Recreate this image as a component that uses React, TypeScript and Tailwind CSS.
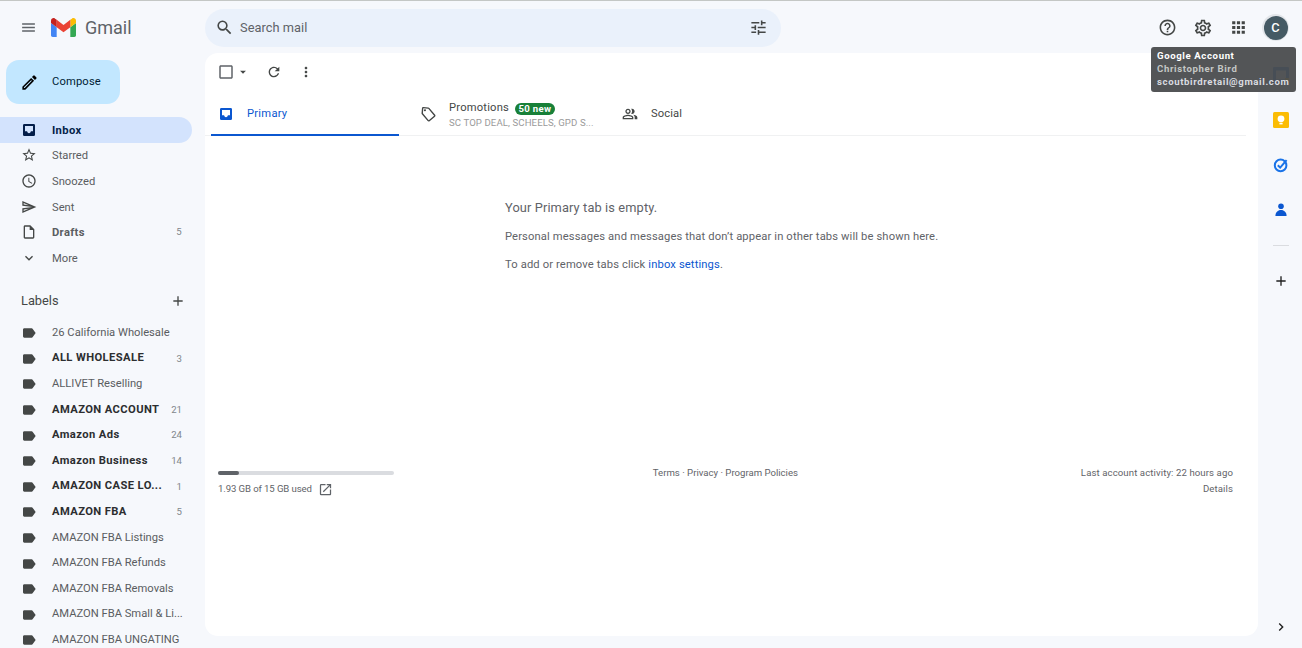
import {
  MdMenu, MdSearch, MdOutlineTune, MdHelpOutline, MdOutlineSettings, MdApps, MdStarBorder,
  MdOutlineWatchLater, MdOutlineSend, MdOutlineInsertDriveFile, MdExpandMore, MdAdd, MdLabel, MdRefresh,
  MdMoreVert, MdArrowDropDown, MdCheckBoxOutlineBlank, MdOutlineLocalOffer, MdOutlinePeopleAlt, MdOpenInNew,
  MdChevronRight, MdOutlineEdit,
} from "react-icons/md"

// filled tray, the react-icons one has a thinner frame than the picture
const InboxIcon = ({ className }: { className?: string }) => (
  <svg viewBox="0 0 24 24" className={className} fill="currentColor">
    <path fillRule="evenodd" d="M5 3h14a2 2 0 0 1 2 2v14a2 2 0 0 1-2 2H5a2 2 0 0 1-2-2V5a2 2 0 0 1 2-2zm1 3v8h3.200c0 1.500 1.300 2.800 2.800 2.800s2.800-1.300 2.800-2.800H18V6z" />
  </svg>
)

const navItems = [
  { icon: InboxIcon, name: "Inbox", active: true },
  { icon: MdStarBorder, name: "Starred" },
  { icon: MdOutlineWatchLater, name: "Snoozed" },
  { icon: MdOutlineSend, name: "Sent" },
  { icon: MdOutlineInsertDriveFile, name: "Drafts", count: "5", bold: true },
  { icon: MdExpandMore, name: "More" },
]

const labels = [
  { name: "26 California Wholesale" },
  { name: "ALL WHOLESALE", count: "3" },
  { name: "ALLIVET Reselling" },
  { name: "AMAZON ACCOUNT", count: "21" },
  { name: "Amazon Ads", count: "24" },
  { name: "Amazon Business", count: "14" },
  { name: "AMAZON CASE LO...", count: "1" },
  { name: "AMAZON FBA", count: "5" },
  { name: "AMAZON FBA Listings" },
  { name: "AMAZON FBA Refunds" },
  { name: "AMAZON FBA Removals" },
  { name: "AMAZON FBA Small & Li..." },
  { name: "AMAZON FBA UNGATING" },
]

const GmailLogo = () => (
  <svg viewBox="52 42 88 66" className="w-[25px] h-[19px]">
    <path fill="#4285f4" d="M58 108h14V74L52 59v43c0 3.32 2.69 6 6 6" />
    <path fill="#34a853" d="M120 108h14c3.32 0 6-2.69 6-6V59l-20 15" />
    <path fill="#fbbc04" d="M120 48v26l20-15v-8c0-7.42-8.47-11.65-14.4-7.2" />
    <path fill="#ea4335" d="M72 74V48l24 18 24-18v26L96 92" />
    <path fill="#c5221f" d="M52 51v8l20 15V48l-5.6-4.2c-5.94-4.45-14.4-.22-14.4 7.2" />
  </svg>
)

const Header = () => (
  <header className="h-[52px] pt-[1px] shrink-0 flex items-center">
    <div className="w-[205px] flex items-center shrink-0 pl-[20px]">
      <MdMenu className="w-[17px] h-[17px] text-[#5f6368]" />
      <div className="ml-[14px] flex"><GmailLogo /></div>
      <span className="ml-[9px] text-[18px] leading-none text-[#5f6368]">Gmail</span>
    </div>
    <div className="w-[576px] h-[38px] rounded-full bg-[#eaf1fb] flex items-center pl-[10px] pr-[13px]">
      <MdSearch className="w-[19px] h-[19px] text-[#444746]" />
      <span className="ml-[6px] text-[12.8px] tracking-[0.05px] text-[#5f6368]">Search mail</span>
      <MdOutlineTune className="ml-auto w-[19px] h-[19px] text-[#444746]" />
    </div>
    <div className="ml-auto flex items-center pr-[13px]">
      <MdHelpOutline className="w-[19px] h-[19px] text-[#444746]" />
      <MdOutlineSettings className="ml-[16px] w-[20px] h-[20px] text-[#444746]" />
      <MdApps className="ml-[16px] w-[19px] h-[19px] text-[#444746]" />
      <div className="ml-[14px] w-[27px] h-[27px] rounded-full bg-[#e3e6ea] flex items-center justify-center">
        <div className="w-[24px] h-[24px] rounded-full bg-[#455a64] text-white text-[12.8px] font-medium flex items-center justify-center">C</div>
      </div>
    </div>
  </header>
)

const Sidebar = () => (
  <aside className="w-[205px] shrink-0 overflow-hidden">
    <div className="ml-[6px] mt-[7px] w-[114px] h-[44px] rounded-[13px] bg-[#c2e7ff] flex items-center pl-[14px] text-[#001d35]">
      <MdOutlineEdit className="w-[19px] h-[19px] text-black" />
      <span className="ml-[13px] text-[11.2px] tracking-[0.15px]">Compose</span>
    </div>
    <nav className="mt-[13px] w-[192px]">
      {navItems.map(({ icon: Icon, name, active, count, bold }) => (
        <div key={name} className={`h-[25.6px] flex items-center pl-[21px] pr-[10px] rounded-r-full text-[11.2px] ${active ? "bg-[#d3e3fd] text-[#041e49] font-bold tracking-[0.35px]" : "text-[#5a5d61]"} ${bold ? "font-bold tracking-[0.35px] text-[#2c2e30]" : ""}`}>
          <Icon className={`w-[16px] h-[16px] shrink-0 ${active ? "text-[#041e49]" : "text-[#444746]"}`} />
          <span className="ml-[15px] relative top-[1.5px]">{name}</span>
          {count && <span className="ml-auto text-[9.6px] font-normal text-[#80868b]">{count}</span>}
        </div>
      ))}
    </nav>
    <div className="mt-[14px] w-[192px] h-[32px] flex items-center pl-[21px] pr-[6px] text-[12.8px] text-[#444746]">
      <span>Labels</span>
      <MdAdd className="ml-auto w-[16px] h-[16px]" />
    </div>
    <div className="mt-[3.4px] w-[192px]">
      {labels.map(({ name, count }) => (
        <div key={name} className={`h-[25.6px] pt-[1px] flex items-center pl-[21px] pr-[10px] text-[11.2px] ${count ? "font-bold tracking-[0.4px] text-[#2c2e30]" : "text-[#5a5d61]"}`}>
          <MdLabel className="w-[16px] h-[16px] shrink-0 text-[#444746]" />
          <span className="ml-[15px] whitespace-nowrap">{name}</span>
          {count && <span className="ml-auto pl-[8px] text-[9.6px] tracking-normal font-normal text-[#80868b]">{count}</span>}
        </div>
      ))}
    </div>
  </aside>
)

const Tabs = () => (
  <div className="mr-[12px] h-[43px] flex border-b border-[#f0f1f2]">
    <div className="ml-[6px] w-[188px] h-[43px] pl-[7px] pt-[1px] flex items-center border-b-[2px] border-[#0b57d0] text-[#0b57d0]">
      <InboxIcon className="w-[16px] h-[16px]" />
      <span className="ml-[13px] text-[11.2px] tracking-[0.25px]">Primary</span>
    </div>
    <div className="w-[223px] h-[42px] pl-[21px] flex items-center text-[#444746]">
      <MdOutlineLocalOffer className="w-[17px] h-[17px] shrink-0 rotate-[5deg]" />
      <div className="ml-[12px] pt-[2px]">
        <div className="flex items-center h-[14px] text-[11.2px] tracking-[0.2px]">
          Promotions
          <span className="ml-[6px] h-[12px] px-[3.5px] rounded-full bg-[#188038] text-white text-[9.6px] tracking-[0.3px] font-bold leading-[12px]">50 new</span>
        </div>
        <div className="mt-[1px] text-[9.6px] tracking-[0.1px] leading-[12px] text-[#9a9a9a] whitespace-nowrap">SC TOP DEAL, SCHEELS, GPD S...</div>
      </div>
    </div>
    <div className="h-[42px] flex items-center text-[#444746]">
      <MdOutlinePeopleAlt className="w-[16px] h-[16px]" />
      <span className="ml-[13px] text-[11.2px] tracking-[0.1px]">Social</span>
    </div>
  </div>
)

const Main = () => (
  <main className="w-[1053px] h-[583px] rounded-[13px] bg-white shrink-0 flex flex-col overflow-hidden">
    <div className="h-[40px] pb-[2px] flex items-center text-[#444746] pl-[12px]">
      <MdCheckBoxOutlineBlank className="w-[18px] h-[18px] text-[#5f6368]" />
      <MdArrowDropDown className="w-[14px] h-[14px] ml-[1px]" />
      <MdRefresh className="ml-[16px] w-[16px] h-[16px]" />
      <MdMoreVert className="ml-[16px] w-[16px] h-[16px]" />
    </div>
    <Tabs />
    <div className="ml-[300px] mt-[64px] text-[#5f6368]">
      <p className="h-[16px] leading-[16px] text-[12.8px] tracking-[0.12px]">Your Primary tab is empty.</p>
      <p className="mt-[13px] h-[16px] leading-[16px] text-[11.2px] tracking-[0.13px]">Personal messages and messages that don’t appear in other tabs will be shown here.</p>
      <p className="mt-[12px] h-[16px] leading-[16px] text-[11.2px] tracking-[0.13px]">To add or remove tabs click <span className="text-[#0b57d0]">inbox settings</span>.</p>
    </div>
    <div className="mt-[193px] pl-[13px] pr-[25px] flex text-[9.6px] text-[#5f6368]">
      <div className="w-[176px] pt-[5px]">
        <div className="h-[4px] rounded-full bg-[#dadce0]">
          <div className="h-[4px] w-[21px] rounded-full bg-[#5f6368]" />
        </div>
        <div className="mt-[7px] flex items-center h-[14px] tracking-[-0.1px]">
          1.93 GB of 15 GB used
          <MdOpenInNew className="ml-[6px] w-[15px] h-[15px]" />
        </div>
      </div>
      <div className="flex-1 text-center pl-[86px] pr-[110px] leading-[14px]">Terms · Privacy · Program Policies</div>
      <div className="text-right leading-[14px] tracking-[0.1px]">
        <div>Last account activity: 22 hours ago</div>
        <div className="mt-[2px]">Details</div>
      </div>
    </div>
  </main>
)

const RightRail = () => (
  <aside className="flex-1 flex flex-col items-center pt-[14px] pl-[1px]">
    <svg viewBox="0 0 16 16" className="w-[16px] h-[16px]">
      <rect width="16" height="16" rx="1" fill="#1a73e8" />
      <rect x="3" y="3.500" width="10" height="9" fill="#fff" />
      <rect x="12" y="11" width="4" height="5" fill="#fbbc04" />
    </svg>
    <svg viewBox="0 0 16 16" className="mt-[29px] w-[16px] h-[16px]">
      <rect width="16" height="16" rx="1.500" fill="#fbbc04" />
      <circle cx="8" cy="6.800" r="3.400" fill="#fff" />
      <rect x="6.400" y="10.800" width="3.200" height="1.600" fill="#fff" />
    </svg>
    <svg viewBox="0 0 16 16" className="mt-[29px] w-[16px] h-[16px]" fill="none">
      <circle cx="7.600" cy="8.400" r="5.800" stroke="#1a73e8" strokeWidth="2" />
      <path d="M4.800 8.200 7.200 10.600 13.600 3.200" stroke="#1a73e8" strokeWidth="2" />
    </svg>
    <svg viewBox="0 0 16 16" className="mt-[29px] w-[16px] h-[16px]">
      <circle cx="8" cy="4.200" r="2.800" fill="#0b57d0" />
      <path d="M2.400 14c0-3.600 2.400-6 5.600-6s5.600 2.400 5.600 6z" fill="#0b57d0" />
    </svg>
    <div className="mt-[27px] w-[16px] h-px bg-[#dadce0]" />
    <MdAdd className="mt-[27px] w-[16px] h-[16px] text-[#1f1f1f]" />
    <MdChevronRight className="mt-[330px] w-[16px] h-[16px] text-[#1f1f1f]" />
  </aside>
)

const App = () => (
  <div className="relative w-[1302px] h-[648px] overflow-hidden bg-[#f6f8fc] border-t border-[#c4c7c5] font-['Roboto',sans-serif]">
    <Header />
    <div className="flex">
      <Sidebar />
      <Main />
      <RightRail />
    </div>
    <div className="absolute left-[1151px] top-[46px] w-[145px] h-[45px] rounded-[3px] bg-[#4a4c4e]/95 px-[6px] pt-[2px] text-[9.6px] leading-[13px] font-bold tracking-[0.62px] whitespace-nowrap">
      <div className="text-white">Google Account</div>
      <div className="text-[#c4c7c5]">Christopher Bird</div>
      <div className="text-[#dadce0]">scoutbirdretail@gmail.com</div>
    </div>
  </div>
)

export default App
